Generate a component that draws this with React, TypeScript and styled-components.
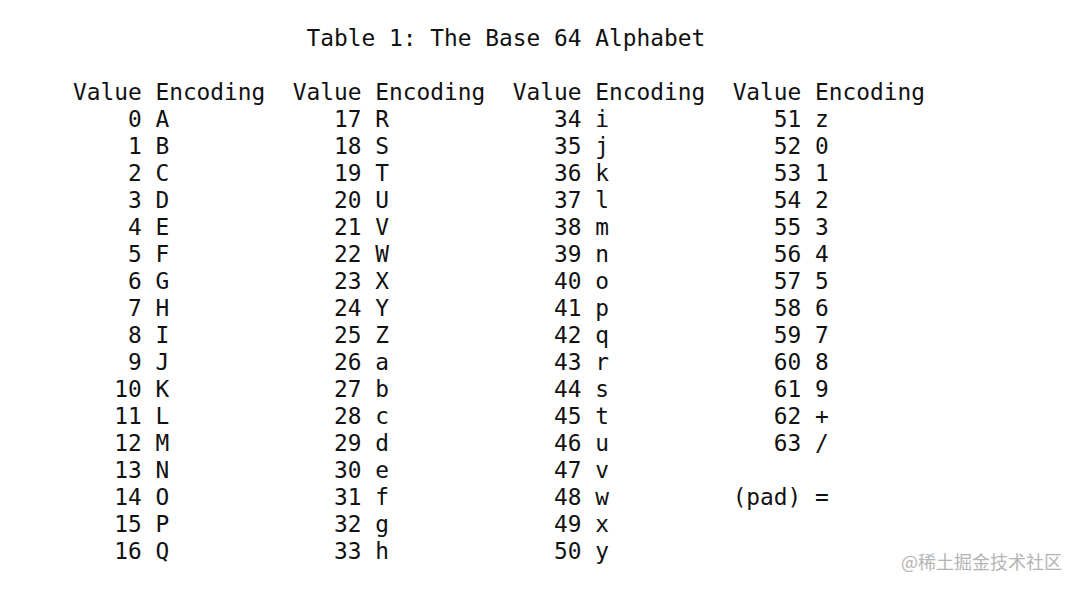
import React from "react";
import styled, { createGlobalStyle } from "styled-components";

const GlobalStyle = createGlobalStyle`
  html, body { margin: 0; padding: 0; background: #ffffff; }
  body { width: 1080px; height: 589px; overflow: hidden; }
`;

const Page = styled.div`
  position: relative;
  width: 1080px;
  height: 589px;
  box-sizing: border-box;
  padding: 25px 0 0 4.25px;
  font-family: "DejaVu Sans Mono", "Liberation Mono", monospace;
  font-size: 22.84px;
  line-height: 27px;
  color: #111;
  white-space: pre;
`;

const Title = styled.div`
  padding-left: 22ch;
  margin-bottom: 27px;
`;

const Columns = styled.div`
  display: flex;
  padding-left: 5ch;
`;

const Group = styled.div`
  display: grid;
  grid-template-columns: 5ch 8ch;
  column-gap: 1ch;
  width: 16ch;
  align-content: start;
`;

const ValueCell = styled.span<{ $head?: boolean }>`
  text-align: ${(p) => (p.$head ? "left" : "right")};
`;

const EncCell = styled.span``;

const Watermark = styled.div`
  position: absolute;
  right: 18px;
  top: 549px;
  font-family: "Noto Sans CJK SC", "Noto Sans", sans-serif;
  font-size: 18px;
  line-height: 24px;
  color: #b4b4b4;
  letter-spacing: 0;
`;

const alphabet =
  "ABCDEFGHIJKLMNOPQRSTUVWXYZabcdefghijklmnopqrstuvwxyz0123456789+/";

type Row = { v: string; e: string } | null;

const groups: Row[][] = [0, 17, 34, 51].map((start, gi) => {
  const rows: Row[] = [];
  const count = gi === 3 ? 13 : 17;
  for (let i = 0; i < count; i++) {
    const n = start + i;
    rows.push({ v: String(n), e: alphabet[n] });
  }
  if (gi === 3) {
    rows.push(null);
    rows.push({ v: "(pad)", e: "=" });
  }
  return rows;
});

export default function App() {
  return (
    <>
      <GlobalStyle />
      <Page>
        <Title>Table 1: The Base 64 Alphabet</Title>
        <Columns>
          {groups.map((rows, gi) => (
            <Group key={gi}>
              <ValueCell $head>Value</ValueCell>
              <EncCell>Encoding</EncCell>
              {rows.map((r, ri) =>
                r ? (
                  <React.Fragment key={ri}>
                    <ValueCell>{r.v}</ValueCell>
                    <EncCell>{r.e}</EncCell>
                  </React.Fragment>
                ) : (
                  <React.Fragment key={ri}>
                    <ValueCell> </ValueCell>
                    <EncCell> </EncCell>
                  </React.Fragment>
                )
              )}
            </Group>
          ))}
        </Columns>
        <Watermark>@稀土掘金技术社区</Watermark>
      </Page>
    </>
  );
}
